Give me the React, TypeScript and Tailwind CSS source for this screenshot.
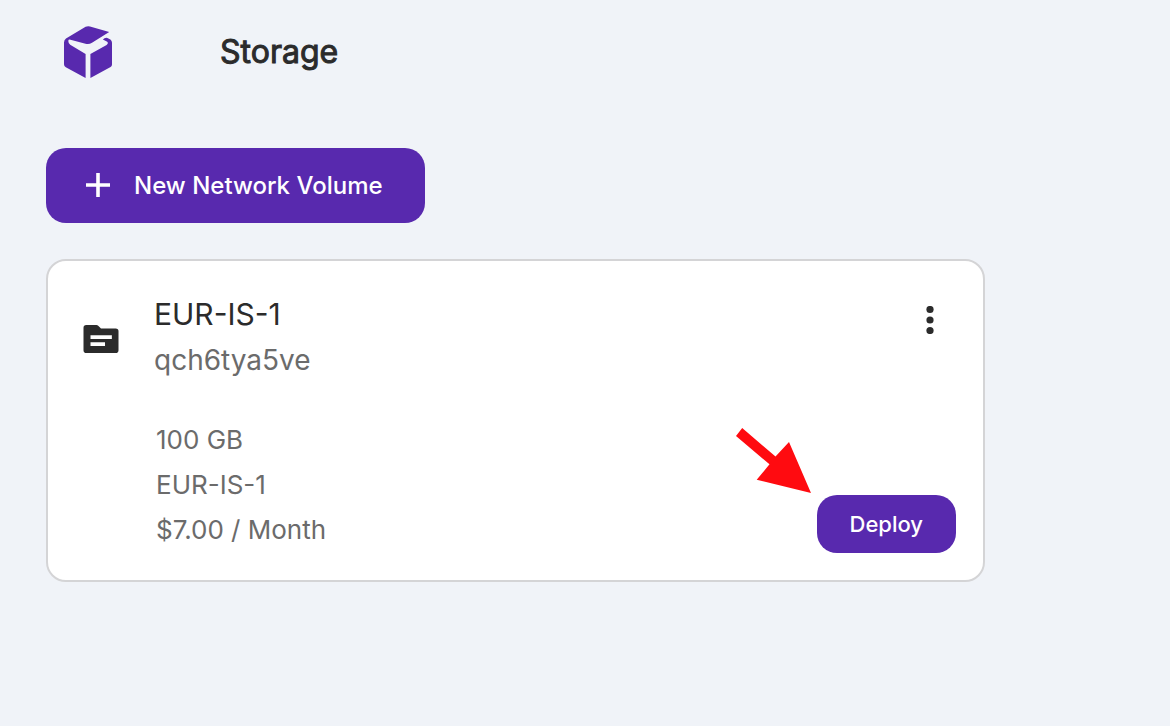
const volume = {
  name: "EUR-IS-1",
  id: "qch6tya5ve",
  details: ["100 GB", "EUR-IS-1", "$7.00 / Month"],
};

function Logo() {
  return (
    <svg className="h-[52px] w-12 text-[#5829ae]" viewBox="0 0 48 52" fill="currentColor" aria-hidden="true">
      <path d="M21.6 0.8Q23.6 -0.2 26 0.4L45.2 6 28 16.8Q25 18.6 21.5 17.7L6.5 13.7Q4.3 13.3 4.3 15 4.4 17.6 6.2 18.8L21.6 28V52L1.8 41.3Q0 40.2 0 38.2V16.4Q0 14 2 12.6Z" />
      <path d="M26.4 28 42.6 18.9Q44.8 17.2 43.2 15.7L38.9 13.6Q40.6 11.4 43.4 11.9L46.4 13.4Q48 14.5 48 16.7V38.4Q48 40.1 46.6 40.9L26.4 52Z" />
    </svg>
  );
}

function PlusIcon() {
  return (
    <svg className="h-6 w-6 overflow-visible" viewBox="0 0 24 24" aria-hidden="true">
      <path d="M12 -1v24M0 11h24" stroke="currentColor" strokeWidth="3.6" />
    </svg>
  );
}

function VolumeIcon() {
  return (
    <svg className="mt-1 h-[42px] w-[42px] shrink-0" viewBox="0 0 24 24" fill="currentColor" aria-hidden="true">
      <path fillRule="evenodd" d="M20.4 6H12l-1.6-1.6Q10 4 9.4 4H3.6Q2 4 2 5.6V18.4Q2 20 3.6 20H20.4Q22 20 22 18.4V7.6Q22 6 20.4 6ZM14.3 16H6v-2.1h8.3V16ZM18.2 12H6V9.9h12.2V12Z" />
    </svg>
  );
}

function MoreIcon() {
  return (
    <svg className="h-7 w-2" viewBox="0 0 8 28" fill="currentColor" aria-hidden="true">
      <circle cx="4" cy="3.5" r="3.6" />
      <circle cx="4" cy="14" r="3.6" />
      <circle cx="4" cy="24.5" r="3.6" />
    </svg>
  );
}

function Pointer() {
  return (
    <svg className="pointer-events-none absolute right-[145px] bottom-[60px] h-[66px] w-[76px]" viewBox="0 0 76 66" aria-hidden="true">
      <path d="M7.2 1 40.5 29.6 54 15 76 66 21.7 52.8 34.5 37.3 1 9Z" fill="#ff0b10" />
    </svg>
  );
}

export default function App() {
  return (
    <div className="min-h-screen bg-[#f0f3f8] px-[46px] pt-[26px] pb-8 font-['Inter',sans-serif] text-[#2b2b2b]">
      <header className="flex items-center gap-[108px] pl-[18px]">
        <Logo />
        <h1 className="text-[32px] leading-10 [-webkit-text-stroke:1px]">Storage</h1>
      </header>

      <main className="flex flex-col items-start gap-9 pt-[70px]">
        <button type="button" className="flex h-[75px] items-center gap-6 rounded-[20px] bg-[#5829ae] pr-[42px] pl-10 text-[24px] font-medium text-white">
          <PlusIcon />
          New Network Volume
        </button>

        <article className="w-full max-w-[939px] rounded-[20px] border-2 border-[#d4d4d6] bg-white pt-[30px] pr-[27px] pb-[27px] pl-8">
          <div className="flex items-center gap-8">
            <VolumeIcon />
            <div className="grow">
              <h2 className="text-[30px] leading-[46px]">{volume.name}</h2>
              <p className="text-[28px] leading-[46px] text-[#6b6b6b]">{volume.id}</p>
            </div>
            <button type="button" aria-label="More options" className="mr-[22px] -mt-[34px] flex">
              <MoreIcon />
            </button>
          </div>

          <div className="flex items-end justify-between pt-[34px] pl-[76px]">
            <ul className="pb-px text-[26px] leading-[45px] text-[#6b6b6b]">
              {volume.details.map((detail) => (
                <li key={detail}>{detail}</li>
              ))}
            </ul>
            <div className="relative">
              <button type="button" className="h-[58px] rounded-[20px] bg-[#5829ae] px-[33px] text-[22px] font-medium text-white">
                Deploy
              </button>
              <Pointer />
            </div>
          </div>
        </article>
      </main>
    </div>
  );
}
